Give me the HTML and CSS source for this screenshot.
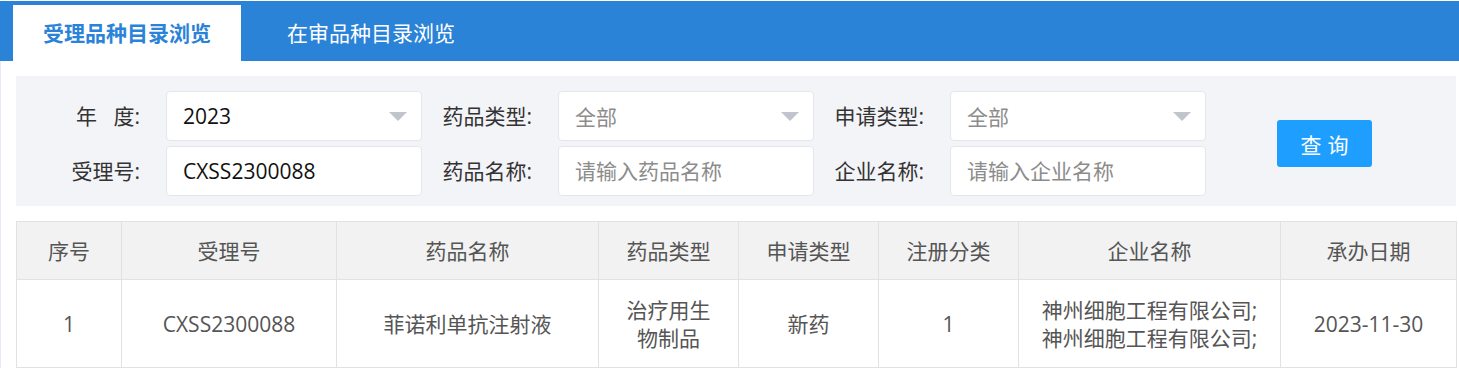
FILE: index.html
```html
<!DOCTYPE html>
<html lang="zh-CN">
<head>
    <meta charset="UTF-8">
    <meta name="viewport" content="width=device-width, initial-scale=1.0">
    <title>受理品种目录浏览</title>
    <link rel="stylesheet" href="styles.css">
</head>
<body>
    <div class="tabs">
        <div class="tab active">受理品种目录浏览</div>
        <div class="tab">在审品种目录浏览</div>
    </div>
    <div class="main">
        <form class="filter">
            <label class="filter-label">年&nbsp;&nbsp;&nbsp;度:</label>
            <div class="field select">
                <span class="value">2023</span>
                <span class="arrow"></span>
            </div>
            <label class="filter-label">药品类型:</label>
            <div class="field select">
                <span class="value empty">全部</span>
                <span class="arrow"></span>
            </div>
            <label class="filter-label">申请类型:</label>
            <div class="field select">
                <span class="value empty">全部</span>
                <span class="arrow"></span>
            </div>
            <div class="btn-cell">
                <button type="button" class="btn-search">查询</button>
            </div>

            <label class="filter-label">受理号:</label>
            <input class="field" type="text" value="CXSS2300088">
            <label class="filter-label">药品名称:</label>
            <input class="field" type="text" placeholder="请输入药品名称">
            <label class="filter-label">企业名称:</label>
            <input class="field" type="text" placeholder="请输入企业名称">
        </form>

        <table class="result">
            <colgroup>
                <col style="width: 105px">
                <col style="width: 215px">
                <col style="width: 262px">
                <col style="width: 140px">
                <col style="width: 140px">
                <col style="width: 140px">
                <col style="width: 262px">
                <col style="width: 176px">
            </colgroup>
            <thead>
                <tr>
                    <th>序号</th>
                    <th>受理号</th>
                    <th>药品名称</th>
                    <th>药品类型</th>
                    <th>申请类型</th>
                    <th>注册分类</th>
                    <th>企业名称</th>
                    <th>承办日期</th>
                </tr>
            </thead>
            <tbody>
                <tr>
                    <td>1</td>
                    <td>CXSS2300088</td>
                    <td>菲诺利单抗注射液</td>
                    <td class="narrow">治疗用生物制品</td>
                    <td>新药</td>
                    <td>1</td>
                    <td>神州细胞工程有限公司;<br>神州细胞工程有限公司;</td>
                    <td>2023-11-30</td>
                </tr>
            </tbody>
        </table>
    </div>
</body>
</html>
```

FILE: styles.css
```css
body {
    margin: 0;
    padding: 0;
    background-color: #fff;
    font-family: "Open Sans", "Noto Sans CJK SC", sans-serif;
    color: #333;
}
.tabs {
    margin-top: 1px;
    height: 60px;
    background-color: #2b83d8;
    display: flex;
    align-items: flex-end;
    padding-left: 13px;
}
.tab {
    height: 56px;
    line-height: 56px;
    padding: 0 46px;
    font-size: 21px;
    color: #fff;
}
.tab.active {
    width: 228px;
    box-sizing: border-box;
    padding: 0;
    text-align: center;
    background-color: #fff;
    color: #2b83d8;
    font-weight: bold;
}
.main {
    border-left: 1px solid #e4ebf4;
    padding: 15px 3px 0 15px;
}
.filter {
    background-color: #f3f4f8;
    display: grid;
    grid-template-columns: 150px 256px 136px 256px 136px 256px auto;
    row-gap: 5px;
    padding: 15px 0 10px;
    margin: 0;
}
.filter-label {
    font-size: 21px;
    line-height: 50px;
    text-align: right;
    padding-right: 26px;
    color: #333;
}
.field {
    box-sizing: border-box;
    height: 50px;
    border: 1px solid #e4e6eb;
    border-radius: 4px;
    background: #fff;
    padding: 0 14px 0 16px;
    font-family: inherit;
    font-size: 21px;
    color: #111;
    outline: none;
}
.field::placeholder {
    color: #8c8c8c;
}
.select {
    display: flex;
    align-items: center;
}
.select .value {
    flex: 1;
}
.select .value.empty {
    color: #8c8c8c;
}
.arrow {
    width: 0;
    height: 0;
    border-left: 9px solid transparent;
    border-right: 9px solid transparent;
    border-top: 9px solid #c0c4cc;
}
.btn-cell {
    grid-row: 1 / span 2;
    grid-column: 7;
    display: flex;
    align-items: center;
    padding-left: 71px;
}
.btn-search {
    width: 95px;
    height: 47px;
    border: none;
    border-radius: 3px;
    background-color: #1e9fff;
    color: #fff;
    font-family: inherit;
    font-size: 21px;
    letter-spacing: 6px;
    text-indent: 6px;
    cursor: pointer;
}
.result {
    margin-top: 15px;
    width: 1440px;
    table-layout: fixed;
    border-collapse: collapse;
    font-size: 21px;
    color: #555;
}
.result th,
.result td {
    border: 1px solid #e2e2e2;
    text-align: center;
    vertical-align: middle;
    font-weight: normal;
    line-height: 28px;
}
.result th {
    height: 57px;
    background-color: #f2f2f2;
    padding: 0 10px;
}
.result td {
    height: 87px;
    padding: 0 10px;
}
.result td.narrow {
    padding: 0 24px;
}
```
